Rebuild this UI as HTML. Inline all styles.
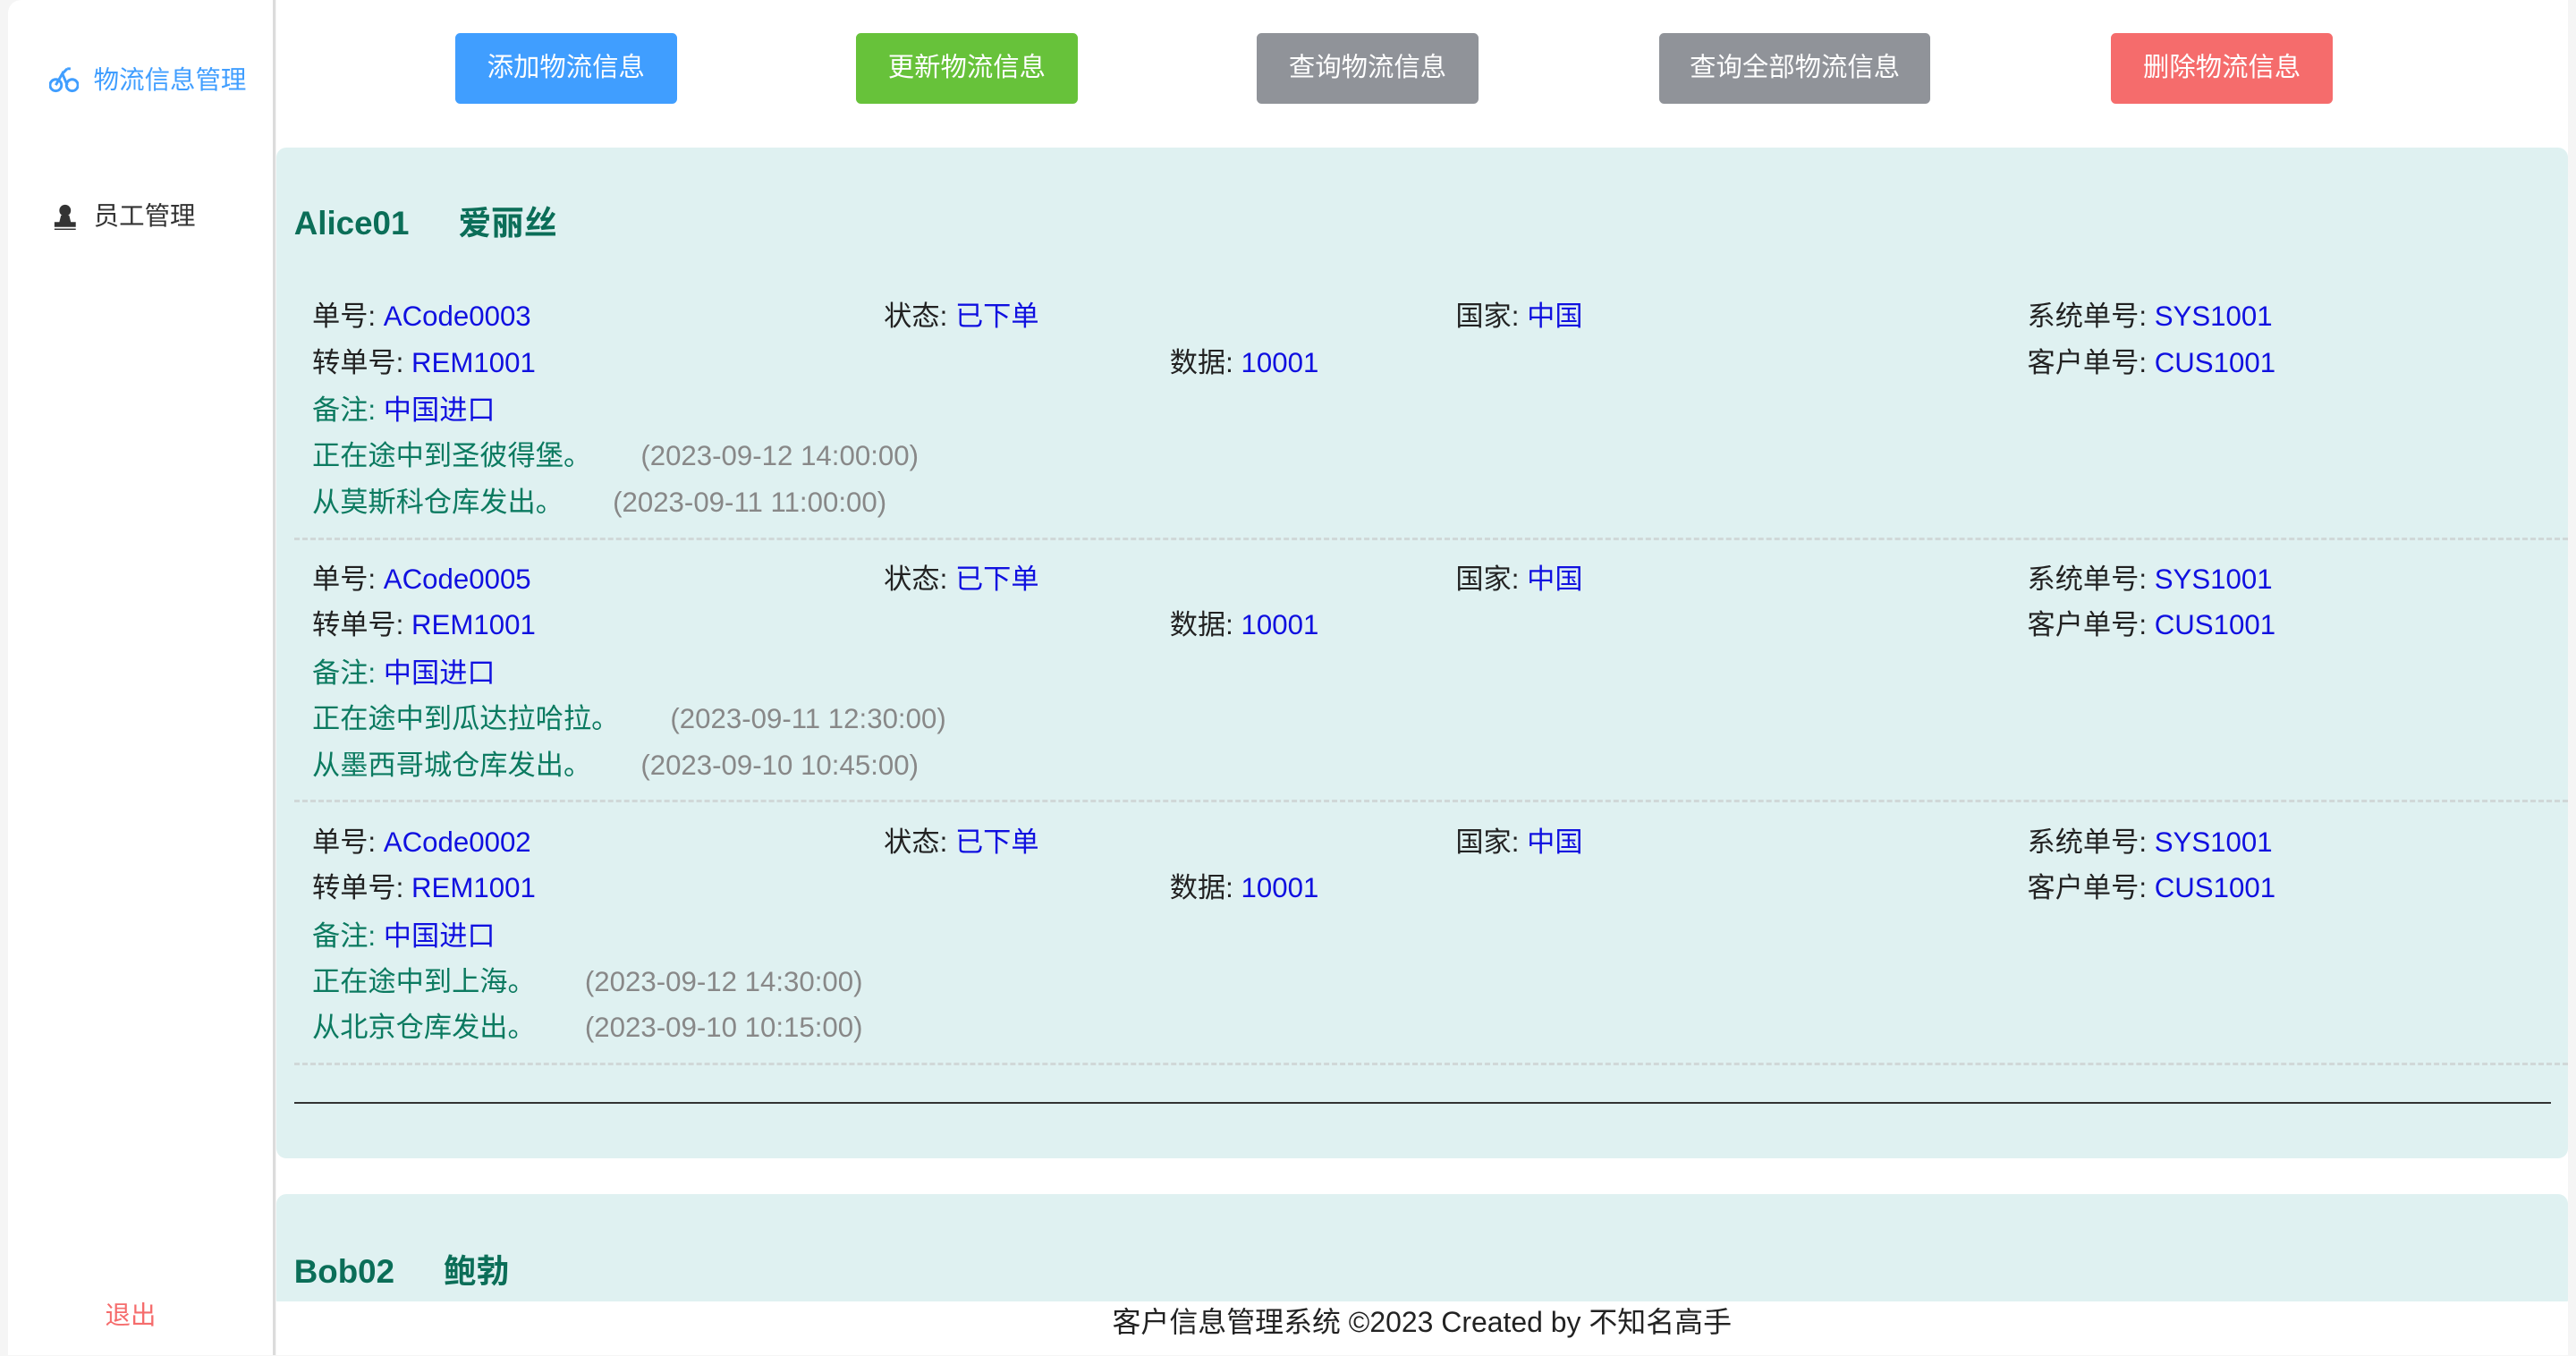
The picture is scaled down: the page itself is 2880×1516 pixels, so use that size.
<!DOCTYPE html>
<html><head><meta charset="utf-8"><style>
html,body{margin:0;padding:0;}
body{width:2880px;height:1516px;overflow:hidden;background:#f5f5f5;font-family:"Liberation Sans","Noto Sans CJK SC",sans-serif;}
#w{zoom:1.8367;width:1568px;height:825px;position:relative;overflow:hidden;background:#f5f5f5}
.side{position:absolute;left:5px;top:0;width:161px;height:825px;background:#fff;border-right:2px solid #dcdcdc;border-radius:8px 0 0 0}
.a{position:absolute;font-size:15.5px;line-height:20px}
.main{position:absolute;left:168px;top:0;width:1395px;height:825px;background:#fff}
.btn{position:absolute;top:20px;height:43px;line-height:43px;color:#fff;text-align:center;font-size:16px;border-radius:3px}
.card{position:absolute;left:168px;width:1395px;background:#dff1f1;border-radius:6px}
.h{position:absolute;font-size:20px;font-weight:bold;color:#0b6e58;line-height:24px;height:24px}
.t{position:absolute;font-size:17px;color:#222;white-space:nowrap;line-height:20px}
.t b{font-weight:normal;color:#1010e0}
.g{color:#0b7a60}
.ts{color:#888}
.sep{position:absolute;left:179px;width:1384px;border-top:2px dashed #d0d8d8}
</style></head><body><div id="w">
<div class="side">
<svg style="position:absolute;left:25px;top:41px" width="18" height="16" viewBox="0 0 18 16" fill="none" stroke="#409eff" stroke-width="1.6"><circle cx="4" cy="11" r="3.5"/><circle cx="14" cy="11" r="3.5"/><path d="M4 11 L8 4 L11 11 M8 4 L11 1 M11 1 h2"/></svg>
<div class="a" style="left:52px;top:39px;color:#409eff">物流信息管理</div>
<svg style="position:absolute;left:27px;top:124px" width="15" height="16" viewBox="0 0 15 16" fill="#333"><circle cx="7.5" cy="4" r="3.5"/><path d="M5 7h5l1 4h3v3H1v-3h3z"/><rect x="1" y="15" width="13" height="1"/></svg>
<div class="a" style="left:52px;top:122px;color:#333">员工管理</div>
<div class="a" style="left:59px;top:791px;color:#f56c6c">退出</div>
</div>
<div class="main"></div>
<div class="btn" style="left:277px;width:135px;background:#409eff">添加物流信息</div>
<div class="btn" style="left:521px;width:135px;background:#67c23a">更新物流信息</div>
<div class="btn" style="left:765px;width:135px;background:#909399">查询物流信息</div>
<div class="btn" style="left:1010px;width:165px;background:#909399">查询全部物流信息</div>
<div class="btn" style="left:1285px;width:135px;background:#f56c6c">删除物流信息</div>

<div class="card" style="top:90px;height:615px"></div>
<div class="h" style="left:179px;top:124px">Alice01</div><div class="h" style="left:279px;top:124px">爱丽丝</div>

<div class="t" style="left:190px;top:183px">单号: <b>ACode0003</b></div>
<div class="t" style="left:538px;top:183px">状态: <b>已下单</b></div>
<div class="t" style="left:886px;top:183px">国家: <b>中国</b></div>
<div class="t" style="left:1234px;top:183px">系统单号: <b>SYS1001</b></div>
<div class="t" style="left:190px;top:211px">转单号: <b>REM1001</b></div>
<div class="t" style="left:712px;top:211px">数据: <b>10001</b></div>
<div class="t" style="left:1234px;top:211px">客户单号: <b>CUS1001</b></div>
<div class="t g" style="left:190px;top:240px">备注: <b>中国进口</b></div>
<div class="t g" style="left:190px;top:268px">正在途中到圣彼得堡。</div><div class="t ts" style="left:390px;top:268px">(2023-09-12 14:00:00)</div>
<div class="t g" style="left:190px;top:296px">从莫斯科仓库发出。</div><div class="t ts" style="left:373px;top:296px">(2023-09-11 11:00:00)</div>
<div class="sep" style="top:327px"></div>

<div class="t" style="left:190px;top:343px">单号: <b>ACode0005</b></div>
<div class="t" style="left:538px;top:343px">状态: <b>已下单</b></div>
<div class="t" style="left:886px;top:343px">国家: <b>中国</b></div>
<div class="t" style="left:1234px;top:343px">系统单号: <b>SYS1001</b></div>
<div class="t" style="left:190px;top:371px">转单号: <b>REM1001</b></div>
<div class="t" style="left:712px;top:371px">数据: <b>10001</b></div>
<div class="t" style="left:1234px;top:371px">客户单号: <b>CUS1001</b></div>
<div class="t g" style="left:190px;top:400px">备注: <b>中国进口</b></div>
<div class="t g" style="left:190px;top:428px">正在途中到瓜达拉哈拉。</div><div class="t ts" style="left:408px;top:428px">(2023-09-11 12:30:00)</div>
<div class="t g" style="left:190px;top:456px">从墨西哥城仓库发出。</div><div class="t ts" style="left:390px;top:456px">(2023-09-10 10:45:00)</div>
<div class="sep" style="top:487px"></div>

<div class="t" style="left:190px;top:503px">单号: <b>ACode0002</b></div>
<div class="t" style="left:538px;top:503px">状态: <b>已下单</b></div>
<div class="t" style="left:886px;top:503px">国家: <b>中国</b></div>
<div class="t" style="left:1234px;top:503px">系统单号: <b>SYS1001</b></div>
<div class="t" style="left:190px;top:531px">转单号: <b>REM1001</b></div>
<div class="t" style="left:712px;top:531px">数据: <b>10001</b></div>
<div class="t" style="left:1234px;top:531px">客户单号: <b>CUS1001</b></div>
<div class="t g" style="left:190px;top:560px">备注: <b>中国进口</b></div>
<div class="t g" style="left:190px;top:588px">正在途中到上海。</div><div class="t ts" style="left:356px;top:588px">(2023-09-12 14:30:00)</div>
<div class="t g" style="left:190px;top:616px">从北京仓库发出。</div><div class="t ts" style="left:356px;top:616px">(2023-09-10 10:15:00)</div>
<div class="sep" style="top:647px"></div>
<div style="position:absolute;left:179px;top:671px;width:1374px;border-top:1.5px solid #333"></div>

<div class="card" style="top:727px;height:70px"></div>
<div class="h" style="left:179px;top:762px">Bob02</div><div class="h" style="left:270px;top:762px">鲍勃</div>
<div style="position:absolute;left:168px;top:792px;width:1395px;height:33px;background:#fff"></div>
<div class="t" style="left:677px;top:795px;color:#222;font-size:17.4px">客户信息管理系统 ©2023 Created by 不知名高手</div>
</div></body></html>
